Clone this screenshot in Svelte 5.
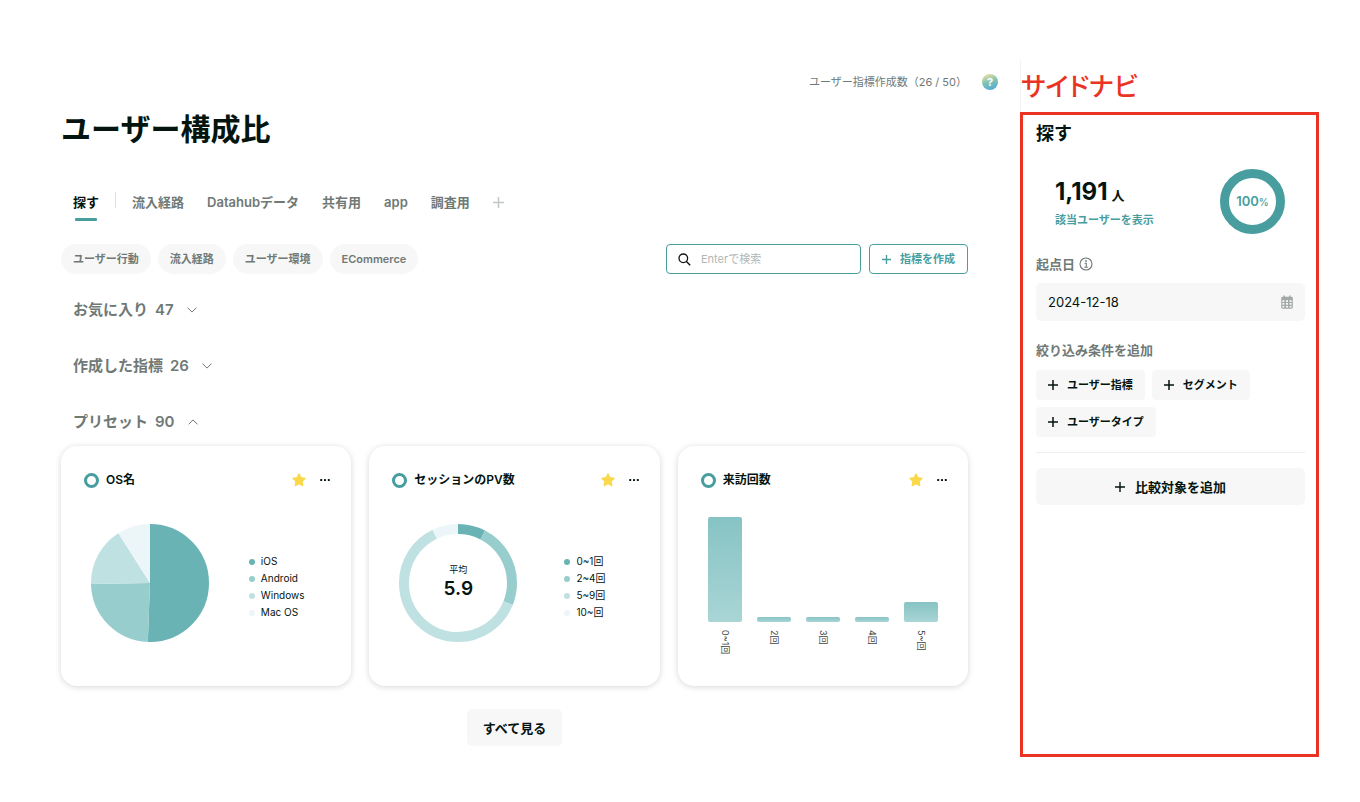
<script lang="ts">
  type Slice = { label: string; value: number };

  const colors = ["#69b3b5", "#98cdcd", "#bfe1e1", "#ecf6f8"];
  const tabs = ["流入経路", "Datahubデータ", "共有用", "app", "調査用"];
  const categories = ["ユーザー行動", "流入経路", "ユーザー環境", "ECommerce"];
  const conditions = ["ユーザー指標", "セグメント", "ユーザータイプ"];
  const groups = [
    { name: "お気に入り", count: 47, open: false },
    { name: "作成した指標", count: 26, open: false },
    { name: "プリセット", count: 90, open: true },
  ];
  const osSlices: Slice[] = [
    { label: "iOS", value: 50.6 },
    { label: "Android", value: 24.1 },
    { label: "Windows", value: 16.3 },
    { label: "Mac OS", value: 9 },
  ];
  const pvSlices: Slice[] = [
    { label: "0~1回", value: 7.6 },
    { label: "2~4回", value: 23.5 },
    { label: "5~9回", value: 61.8 },
    { label: "10~回", value: 7.1 },
  ];
  const visits = [
    { label: "0~1回", value: 100 },
    { label: "2回", value: 5 },
    { label: "3回", value: 5 },
    { label: "4回", value: 5 },
    { label: "5~回", value: 19 },
  ];

  let keyword = $state("");
  let baseDate = $state("2024-12-18");

  function startOf(slices: Slice[], index: number) {
    return slices.slice(0, index).reduce((sum, s) => sum + s.value, 0);
  }
</script>

{#snippet plus(size: number, width: number)}
  <svg class="icon" width={size} height={size} viewBox="0 0 10 10" aria-hidden="true">
    <path d="M5 0v10M0 5h10" stroke="currentColor" stroke-width={width} fill="none" />
  </svg>
{/snippet}

{#snippet ring(slices: Slice[], radius: number, width: number)}
  <svg class="chart" width="118" height="118" viewBox="0 0 118 118" aria-hidden="true">
    <g transform="rotate(-90 59 59)" fill="none" stroke-width={width}>
      {#each slices as slice, i}
        <circle
          cx="59"
          cy="59"
          r={radius}
          pathLength="100"
          stroke={colors[i]}
          stroke-dasharray="{slice.value} {100 - slice.value}"
          stroke-dashoffset={-startOf(slices, i)}
        />
      {/each}
    </g>
  </svg>
{/snippet}

{#snippet legend(slices: Slice[])}
  <ul class="legend">
    {#each slices as slice, i}
      <li><i style="background: {colors[i]}"></i>{slice.label}</li>
    {/each}
  </ul>
{/snippet}

{#snippet cardHead(title: string)}
  <header class="card-head">
    <span class="card-mark"></span>
    <h3>{title}</h3>
    <button class="plain" aria-label="お気に入り">
      <svg class="icon" width="14" height="14" viewBox="0 0 14 14">
        <path
          d="M7 .8 8.9 4.7 13.2 5.3 10.1 8.3 10.8 12.6 7 10.6 3.2 12.6 3.9 8.3 .8 5.3 5.1 4.7Z"
          fill="#fad84c"
          stroke="#fad84c"
          stroke-width="1.2"
          stroke-linejoin="round"
        />
      </svg>
    </button>
    <button class="plain" aria-label="メニュー">
      <svg class="icon" width="10" height="4" viewBox="0 0 10 4" fill="#04140f">
        <rect x="0.2" y="1" width="2" height="2" rx="0.6" />
        <rect x="4" y="1" width="2" height="2" rx="0.6" />
        <rect x="7.8" y="1" width="2" height="2" rx="0.6" />
      </svg>
    </button>
  </header>
{/snippet}

<div class="page">
  <main>
    <div class="status">
      <span>ユーザー指標作成数（26 / 50）</span>
      <button class="help" aria-label="ヘルプ">?</button>
    </div>

    <div class="content">
      <h1>ユーザー構成比</h1>

      <nav class="tabs">
        <button class="tab active">探す</button>
        <span class="divider"></span>
        {#each tabs as tab}
          <button class="tab">{tab}</button>
        {/each}
        <button class="tab add" aria-label="タブを追加">{@render plus(11, 1.4)}</button>
      </nav>

      <div class="toolbar">
        <div class="chips">
          {#each categories as category}
            <button class="chip">{category}</button>
          {/each}
        </div>
        <label class="search">
          <svg class="icon" width="13" height="13" viewBox="0 0 13 13" aria-hidden="true">
            <circle cx="5.3" cy="5.3" r="4.3" fill="none" stroke="#111" stroke-width="1.3" />
            <path d="M8.4 8.4 12.2 12.2" stroke="#111" stroke-width="1.4" />
          </svg>
          <input type="text" placeholder="Enterで検索" aria-label="検索" bind:value={keyword} />
        </label>
        <button class="create">{@render plus(9, 1.5)}指標を作成</button>
      </div>

      <div class="groups">
        {#each groups as group}
          <h2>
            <button class="group" aria-expanded={group.open}>
              <span>{group.name}</span>
              <span>{group.count}</span>
              <svg class="icon" class:up={group.open} width="10" height="6" viewBox="0 0 10 6">
                <path d="M.5.6 5 5.1 9.5.6" fill="none" stroke="currentColor" />
              </svg>
            </button>
          </h2>
        {/each}
      </div>

      <div class="cards">
        <article class="card">
          {@render cardHead("OS名")}
          <div class="card-body">
            {@render ring(osSlices, 29.5, 59)}
            {@render legend(osSlices)}
          </div>
        </article>

        <article class="card">
          {@render cardHead("セッションのPV数")}
          <div class="card-body">
            <div class="donut">
              {@render ring(pvSlices, 54, 10)}
              <p>平均<strong>5.9</strong></p>
            </div>
            {@render legend(pvSlices)}
          </div>
        </article>

        <article class="card">
          {@render cardHead("来訪回数")}
          <div class="bars">
            {#each visits as visit}
              <div class="bar-col">
                <div class="bar-area"><div class="bar" style="height: {visit.value}%"></div></div>
                <span>{visit.label}</span>
              </div>
            {/each}
          </div>
        </article>
      </div>

      <button class="more">すべて見る</button>
    </div>
  </main>

  <aside>
    <p class="note">サイドナビ</p>
    <section class="panel">
      <h2>探す</h2>
      <div class="summary">
        <div class="users">
          <p class="total"><strong>1,191</strong>人</p>
          <a href="#users">該当ユーザーを表示</a>
        </div>
        <div class="rate"><strong>100</strong>%</div>
      </div>

      <label class="caption" for="base-date">
        起点日
        <svg class="icon" width="14" height="14" viewBox="0 0 14 14" aria-hidden="true">
          <circle cx="7" cy="7" r="6" fill="none" stroke="currentColor" stroke-width="1.1" />
          <path d="M5.6 6.2h1.7v3.9M5.3 10.2h3.6" fill="none" stroke="currentColor" stroke-width="1.1" />
          <circle cx="7" cy="4" r=".9" fill="currentColor" />
        </svg>
      </label>
      <div class="date">
        <input id="base-date" type="text" bind:value={baseDate} />
        <svg class="icon" width="12" height="14" viewBox="0 0 12 14" aria-hidden="true">
          <path d="M3.2.4v3M8.8.4v3" stroke="#a3a9a7" stroke-width="1.5" />
          <rect x=".2" y="1.7" width="11.6" height="12" rx="1.4" fill="#a3a9a7" />
          <path
            d="M1.4 5.2h2v1.7h-2zM5 5.2h2v1.7H5zM8.6 5.2h2v1.7h-2zM1.4 8.1h2v1.7h-2zM5 8.1h2v1.7H5zM8.6 8.1h2v1.7h-2zM1.4 11h2v1.5h-2zM5 11h2v1.5H5zM8.6 11h2v1.5h-2z"
            fill="#f7f7f7"
          />
        </svg>
      </div>

      <p class="caption">絞り込み条件を追加</p>
      <div class="conditions">
        {#each conditions as condition}
          <button>{@render plus(10, 1.5)}{condition}</button>
        {/each}
      </div>
      <hr />
      <button class="compare">{@render plus(10, 1.4)}比較対象を追加</button>
    </section>
  </aside>
</div>

<style>
  :global(body) {
    margin: 0;
    background: #fff;
  }
  .page {
    --ink: #04140f;
    --muted: #6f7976;
    --teal: #489e9f;
    --soft: #f7f7f7;
    display: flex;
    padding: 60px 41px 45px 61px;
    color: var(--ink);
    font: 13px/20px Inter, "Noto Sans CJK JP", sans-serif;
  }
  .page :global(*) {
    box-sizing: border-box;
  }
  h1, h2, h3, p, ul {
    margin: 0;
    padding: 0;
  }
  button {
    padding: 0;
    border: 0;
    background: none;
    color: inherit;
    font: inherit;
    white-space: nowrap;
    cursor: pointer;
  }
  input {
    flex: 1;
    min-width: 0;
    padding: 0;
    border: 0;
    outline: 0;
    background: none;
    color: inherit;
    font: inherit;
  }
  .icon {
    display: block;
    flex: none;
  }
  main {
    flex: 1;
    min-width: 0;
    padding: 0 22px 11px 0;
  }
  .status {
    display: flex;
    align-items: center;
    justify-content: flex-end;
    gap: 15px;
    height: 44px;
    color: var(--muted);
    font-size: 11px;
  }
  .help {
    width: 16px;
    height: 16px;
    border-radius: 50%;
    background: linear-gradient(160deg, #f3dfa0 5%, #7cc3b4 50%, #4fa6dc 95%);
    color: #fff;
    font-size: 11px;
    font-weight: 700;
    line-height: 16px;
  }
  .content {
    display: flex;
    flex-direction: column;
    margin-right: 30px;
  }
  h1 {
    margin-top: 5px;
    font-size: 30px;
    line-height: 40px;
  }
  .tabs {
    display: flex;
    align-items: flex-start;
    gap: 23px;
    height: 29px;
    margin: 43px 0 23px 12px;
    color: var(--muted);
    font-weight: 600;
  }
  .tab.active {
    color: var(--ink);
  }
  .tab.active::after {
    content: "";
    display: block;
    width: 22px;
    height: 3px;
    margin: 6px auto 0;
    border-radius: 1px;
    background: var(--teal);
  }
  .divider {
    width: 1px;
    height: 16px;
    margin: 0 -7px;
    background: #dfe2e1;
  }
  .tab.add {
    display: flex;
    align-items: center;
    height: 20px;
    color: #c3c8c6;
  }
  .toolbar,
  .chips {
    display: flex;
    gap: 8px;
    font-size: 11px;
    font-weight: 600;
  }
  .chips {
    gap: 7px;
    margin-right: auto;
  }
  .chip {
    height: 30px;
    padding: 0 12px;
    border-radius: 15px;
    background: var(--soft);
    color: var(--muted);
  }
  .search,
  .create {
    display: flex;
    align-items: center;
    height: 30px;
    border: 1px solid var(--teal);
    border-radius: 4px;
  }
  .search {
    flex: 0 1 195px;
    gap: 10px;
    min-width: 0;
    padding: 0 11px;
    font-weight: 400;
  }
  .search input::placeholder {
    color: #b1b7b5;
    opacity: 1;
  }
  .create {
    gap: 9px;
    padding: 0 12px;
    color: var(--teal);
  }
  .groups {
    display: flex;
    flex-direction: column;
    gap: 36px;
    margin: 26px 0 14px 12px;
  }
  .groups h2 {
    font-size: 15px;
    font-weight: 600;
    line-height: 20px;
  }
  .group {
    display: flex;
    align-items: center;
    gap: 7px;
    color: var(--muted);
  }
  .group .icon {
    margin-left: 6px;
  }
  .group .up {
    transform: rotate(180deg);
  }
  .cards {
    display: grid;
    grid-template-columns: repeat(3, 1fr);
    gap: 18px;
  }
  .card {
    min-height: 240px;
    border-radius: 16px;
    background: #fff;
    box-shadow: 0 1px 6px rgba(0, 0, 0, 0.16);
  }
  .card-head {
    display: flex;
    align-items: center;
    padding: 24px 21px 0 23px;
  }
  .card-mark {
    width: 15px;
    height: 15px;
    margin-right: 7px;
    border: 3px solid var(--teal);
    border-radius: 50%;
  }
  h3 {
    flex: 1;
    font-size: 12px;
    font-weight: 600;
    line-height: 20px;
  }
  .card-head .plain + .plain {
    margin-left: 14px;
  }
  .card-body {
    display: flex;
    align-items: center;
    padding: 34px 7px 0 30px;
  }
  .chart {
    display: block;
  }
  .legend {
    margin: 8px auto 0;
    list-style: none;
    font-size: 10px;
    line-height: 17px;
  }
  .legend li {
    display: flex;
    align-items: center;
    gap: 6px;
  }
  .legend i {
    width: 6px;
    height: 6px;
    border-radius: 50%;
  }
  .donut {
    display: grid;
    place-items: center;
  }
  .donut > :global(*) {
    grid-area: 1 / 1;
  }
  .donut p {
    font-size: 9px;
    line-height: 12px;
    text-align: center;
  }
  .donut strong {
    display: block;
    font-size: 19px;
    font-weight: 600;
    line-height: 26px;
  }
  .bars {
    display: flex;
    justify-content: space-between;
    padding: 27px 30px 0;
  }
  .bar-col {
    display: flex;
    flex-direction: column;
    align-items: center;
    gap: 8px;
    width: 34px;
  }
  .bar-area {
    display: flex;
    align-items: flex-end;
    width: 100%;
    height: 105px;
  }
  .bar {
    width: 100%;
    border-radius: 2px;
    background: linear-gradient(#87c3c4, #a9d5d5);
  }
  .bar-col span {
    color: #3c4744;
    font-size: 9px;
    line-height: 12px;
    writing-mode: vertical-rl;
    text-orientation: sideways;
  }
  .more {
    align-self: center;
    height: 37px;
    margin-top: 23px;
    padding: 0 16px;
    border-radius: 5px;
    background: var(--soft);
    font-weight: 600;
  }
  aside {
    display: flex;
    flex-direction: column;
    flex: 0 0 299px;
  }
  .note {
    height: 52px;
    padding-top: 7px;
    border-left: 1px solid #f3f4f4;
    color: #eb3323;
    font-size: 26px;
    font-weight: 500;
    font-feature-settings: "palt";
    line-height: 40px;
  }
  .panel {
    flex: 1;
    padding: 9px 11px 20px 13px;
    border: 3px solid #eb3323;
  }
  .panel h2 {
    font-size: 18px;
    line-height: 20px;
  }
  .summary {
    display: flex;
    align-items: center;
    justify-content: space-between;
    padding: 25px 20px 20px 19px;
  }
  .users {
    padding-top: 4px;
  }
  .total {
    font-size: 13px;
    font-weight: 600;
    line-height: 30px;
  }
  .total strong {
    margin-right: 4px;
    font-size: 24px;
    font-weight: 700;
  }
  .summary a {
    display: block;
    color: var(--teal);
    font-size: 11px;
    font-weight: 600;
    line-height: 20px;
    text-decoration: none;
  }
  .rate {
    width: 65px;
    height: 65px;
    border: 9px solid var(--teal);
    border-radius: 50%;
    color: var(--teal);
    font-size: 10px;
    font-weight: 500;
    line-height: 47px;
    text-align: center;
    white-space: nowrap;
  }
  .rate strong {
    font-size: 13px;
    font-weight: 600;
  }
  .caption {
    display: flex;
    align-items: center;
    gap: 4px;
    color: var(--muted);
    font-weight: 600;
  }
  .date {
    display: flex;
    align-items: center;
    height: 38px;
    margin: 9px 0 19px;
    padding: 0 12px;
    border-radius: 5px;
    background: var(--soft);
  }
  .conditions {
    display: flex;
    flex-wrap: wrap;
    gap: 7px;
    margin-top: 10px;
  }
  .conditions button {
    display: flex;
    align-items: center;
    gap: 9px;
    height: 30px;
    padding: 0 12px;
    border-radius: 4px;
    background: var(--soft);
    font-size: 11px;
    font-weight: 600;
  }
  hr {
    margin: 15px 0;
    border: 0;
    border-top: 1px solid #eceeed;
  }
  .compare {
    display: flex;
    align-items: center;
    justify-content: center;
    gap: 10px;
    width: 100%;
    height: 37px;
    border-radius: 5px;
    background: var(--soft);
    font-weight: 600;
  }
</style>
